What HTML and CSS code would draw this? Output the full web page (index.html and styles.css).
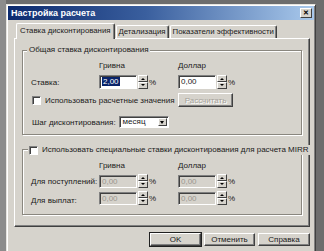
FILE: index.html
```html
<!DOCTYPE html>
<html lang="ru">
<head>
    <meta charset="UTF-8">
    <title>Настройка расчета</title>
    <link rel="stylesheet" href="styles.css">
</head>
<body>
    <div class="window">
        <div class="titlebar">
            <span class="title">Настройка расчета</span>
            <span class="close">&#x2715;</span>
        </div>

        <div class="tabs">
            <div class="tab active">Ставка дисконтирования</div>
            <div class="tab">Детализация</div>
            <div class="tab">Показатели эффективности</div>
        </div>

        <div class="panel">
            <div class="group group-main">
                <span class="legend">Общая ставка дисконтирования</span>
                <div class="grid">
                    <span></span>
                    <span class="colhead">Гривна</span>
                    <span class="colhead">Доллар</span>

                    <span class="label">Ставка:</span>
                    <div class="spin-field">
                        <span class="input"><span class="selected">2,00</span></span>
                        <span class="spinner"><span class="up"></span><span class="down"></span></span>
                        <span class="pct">%</span>
                    </div>
                    <div class="spin-field">
                        <span class="input">0,00</span>
                        <span class="spinner"><span class="up"></span><span class="down"></span></span>
                        <span class="pct">%</span>
                    </div>

                    <label class="check span2"><span class="box"></span>Использовать расчетные значения</label>
                    <span class="btn btn-calc disabled">Рассчитать</span>
                </div>
                <div class="step-row">
                    <span class="label">Шаг дисконтирования:</span>
                    <span class="select">месяц<span class="arrow"></span></span>
                </div>
            </div>

            <div class="group group-mirr">
                <label class="legend check"><span class="box"></span>Использовать специальные ставки дисконтирования для расчета MIRR</label>
                <div class="grid grid-mirr">
                    <span></span>
                    <span class="colhead">Гривна</span>
                    <span class="colhead">Доллар</span>

                    <span class="label">Для поступлений:</span>
                    <div class="spin-field">
                        <span class="input off">0,00</span>
                        <span class="spinner"><span class="up"></span><span class="down"></span></span>
                        <span class="pct">%</span>
                    </div>
                    <div class="spin-field">
                        <span class="input off">0,00</span>
                        <span class="spinner"><span class="up"></span><span class="down"></span></span>
                        <span class="pct">%</span>
                    </div>

                    <span class="label">Для выплат:</span>
                    <div class="spin-field">
                        <span class="input off">0,00</span>
                        <span class="spinner"><span class="up"></span><span class="down"></span></span>
                        <span class="pct">%</span>
                    </div>
                    <div class="spin-field">
                        <span class="input off">0,00</span>
                        <span class="spinner"><span class="up"></span><span class="down"></span></span>
                        <span class="pct">%</span>
                    </div>
                </div>
            </div>
        </div>

        <div class="buttons">
            <span class="btn btn-default">OK</span>
            <span class="btn">Отменить</span>
            <span class="btn btn-help">Справка</span>
        </div>
    </div>
</body>
</html>
```

FILE: styles.css
```css
* {
    box-sizing: border-box;
}
body {
    margin: 0;
    width: 324px;
    height: 251px;
    overflow: hidden;
    background: linear-gradient(to right, #8c8c8c 0, #8c8c8c 6px, #6d6d6d 6px);
    font-family: "Liberation Sans", Arial, sans-serif;
    font-size: 8px;
    color: #1a1a1a;
    padding-top: 4px;
}
.window {
    margin-left: 6px;
    width: 310px;
    height: 247px;
    background: #d6d3cc;
    border: 1px solid;
    border-bottom: none;
    border-color: #e6e4df #404040 #404040 #e6e4df;
    box-shadow: inset 1px 1px 0 #fff, inset -1px 0 0 #808080;
    padding: 1px 1px 0 1px;
}
.titlebar {
    height: 14px;
    display: flex;
    align-items: center;
    justify-content: space-between;
    padding: 0 2px 0 3px;
    background: linear-gradient(to right, #0c2a6e, #3a5f9e 45%, #a9c9ec);
}
.title {
    color: #fff;
    font-weight: bold;
    font-size: 9px;
}
.close {
    width: 12px;
    height: 10px;
    background: #d6d3cc;
    border: 1px solid;
    border-color: #fff #404040 #404040 #fff;
    font-size: 7px;
    line-height: 8px;
    text-align: center;
    font-weight: bold;
    color: #000;
}

.tabs {
    display: flex;
    align-items: flex-end;
    height: 16px;
    margin-top: 2px;
    padding-left: 8px;
}
.tab {
    height: 13px;
    padding: 0 2px;
    line-height: 11px;
    font-size: 7.8px;
    border: 1px solid;
    border-bottom: none;
    border-color: #fff #404040 #fff #fff;
    box-shadow: inset -1px 0 0 #808080;
    border-radius: 2px 2px 0 0;
    white-space: nowrap;
    margin-left: 1px;
}
.tab.active {
    height: 16px;
    line-height: 13px;
    margin-left: 0;
    padding: 0 3px;
    position: relative;
    z-index: 1;
    background: #d6d3cc;
    margin-bottom: -1px;
}

.panel {
    margin-left: 6px;
    width: 296px;
    height: 189px;
    border: 1px solid;
    border-color: #fff #404040 #404040 #fff;
    box-shadow: inset -1px -1px 0 #808080;
    padding: 11px 0 0 7px;
}

.group {
    position: relative;
    width: 280px;
    border: 1px solid #8a877f;
    box-shadow: 1px 1px 0 #fff, inset 1px 1px 0 #fff;
}
.group-main {
    height: 85px;
    padding: 10px 0 0 8px;
}
.group-mirr {
    height: 66px;
    margin-top: 14px;
    padding: 11px 0 0 8px;
}
.legend {
    position: absolute;
    top: -6px;
    left: 4px;
    padding: 0 2px;
    background: #d6d3cc;
    line-height: 10px;
    white-space: nowrap;
}

.grid {
    display: grid;
    grid-template-columns: 68px 79px auto;
    row-gap: 4px;
    align-items: center;
}
.grid-mirr {
    row-gap: 3px;
}
.grid-mirr .label:last-of-type {
    margin-top: 4px;
}
.colhead {
    line-height: 10px;
}
.label {
    white-space: nowrap;
}

.spin-field {
    display: flex;
    align-items: center;
}
.input {
    width: 38px;
    height: 14px;
    background: #fff;
    border: 1px solid;
    border-color: #808080 #fff #fff #808080;
    box-shadow: inset 1px 1px 0 #404040;
    padding: 0 2px;
    line-height: 12px;
}
.input.off {
    background: #d6d3cc;
    color: #9a978f;
    height: 13px;
}
.selected {
    background: #0a246a;
    color: #fff;
    padding: 0 1px;
}
.spinner {
    width: 10px;
    height: 14px;
    display: flex;
    flex-direction: column;
    margin-left: 1px;
}
.spinner span {
    flex: 1;
    background: #d6d3cc;
    border: 1px solid;
    border-color: #fff #404040 #404040 #fff;
    position: relative;
}
.spinner .up::after,
.spinner .down::after {
    content: "";
    position: absolute;
    left: 2px;
    top: 2px;
    border-left: 2px solid transparent;
    border-right: 2px solid transparent;
}
.spinner .up::after {
    border-bottom: 2px solid #000;
}
.spinner .down::after {
    top: 1px;
    border-top: 2px solid #000;
}
.pct {
    margin-left: 1px;
}

.check {
    display: flex;
    align-items: center;
    white-space: nowrap;
}
.span2 {
    grid-column: span 2;
    padding-left: 1px;
}
.box {
    width: 9px;
    height: 9px;
    background: #fff;
    border: 1px solid;
    border-color: #808080 #fff #fff #808080;
    box-shadow: inset 1px 1px 0 #404040;
    margin-right: 4px;
    flex: none;
}
.group-mirr .legend {
    top: -5px;
    left: 5px;
    padding: 0 3px 0 1px;
}

.step-row {
    display: flex;
    align-items: center;
    margin-top: 9px;
    padding-left: 1px;
}
.select {
    margin-left: 3px;
    width: 50px;
    height: 12px;
    background: #fff;
    border: 1px solid;
    border-color: #808080 #fff #fff #808080;
    box-shadow: inset 1px 1px 0 #404040;
    padding-left: 3px;
    line-height: 10px;
    position: relative;
}
.arrow {
    position: absolute;
    right: 1px;
    top: 1px;
    width: 9px;
    height: 8px;
    background: #d6d3cc;
    border: 1px solid;
    border-color: #fff #404040 #404040 #fff;
}
.arrow::after {
    content: "";
    position: absolute;
    left: 1px;
    top: 2px;
    border-left: 2.5px solid transparent;
    border-right: 2.5px solid transparent;
    border-top: 3px solid #000;
}

.btn {
    display: inline-flex;
    align-items: center;
    justify-content: center;
    height: 13px;
    width: 51px;
    background: #d6d3cc;
    border: 1px solid;
    border-color: #fff #404040 #404040 #fff;
    box-shadow: inset -1px -1px 0 #808080;
    white-space: nowrap;
}
.btn-calc {
    width: 55px;
    height: 14px;
    justify-self: start;
}
.disabled {
    color: #a5a29b;
    text-shadow: 1px 1px 0 #fff;
}
.buttons {
    display: flex;
    justify-content: flex-end;
    gap: 3px;
    margin-top: 6px;
    padding-right: 4px;
}
.btn-default {
    outline: 1px solid #202020;
}
.btn-help {
    width: 52px;
}
```
